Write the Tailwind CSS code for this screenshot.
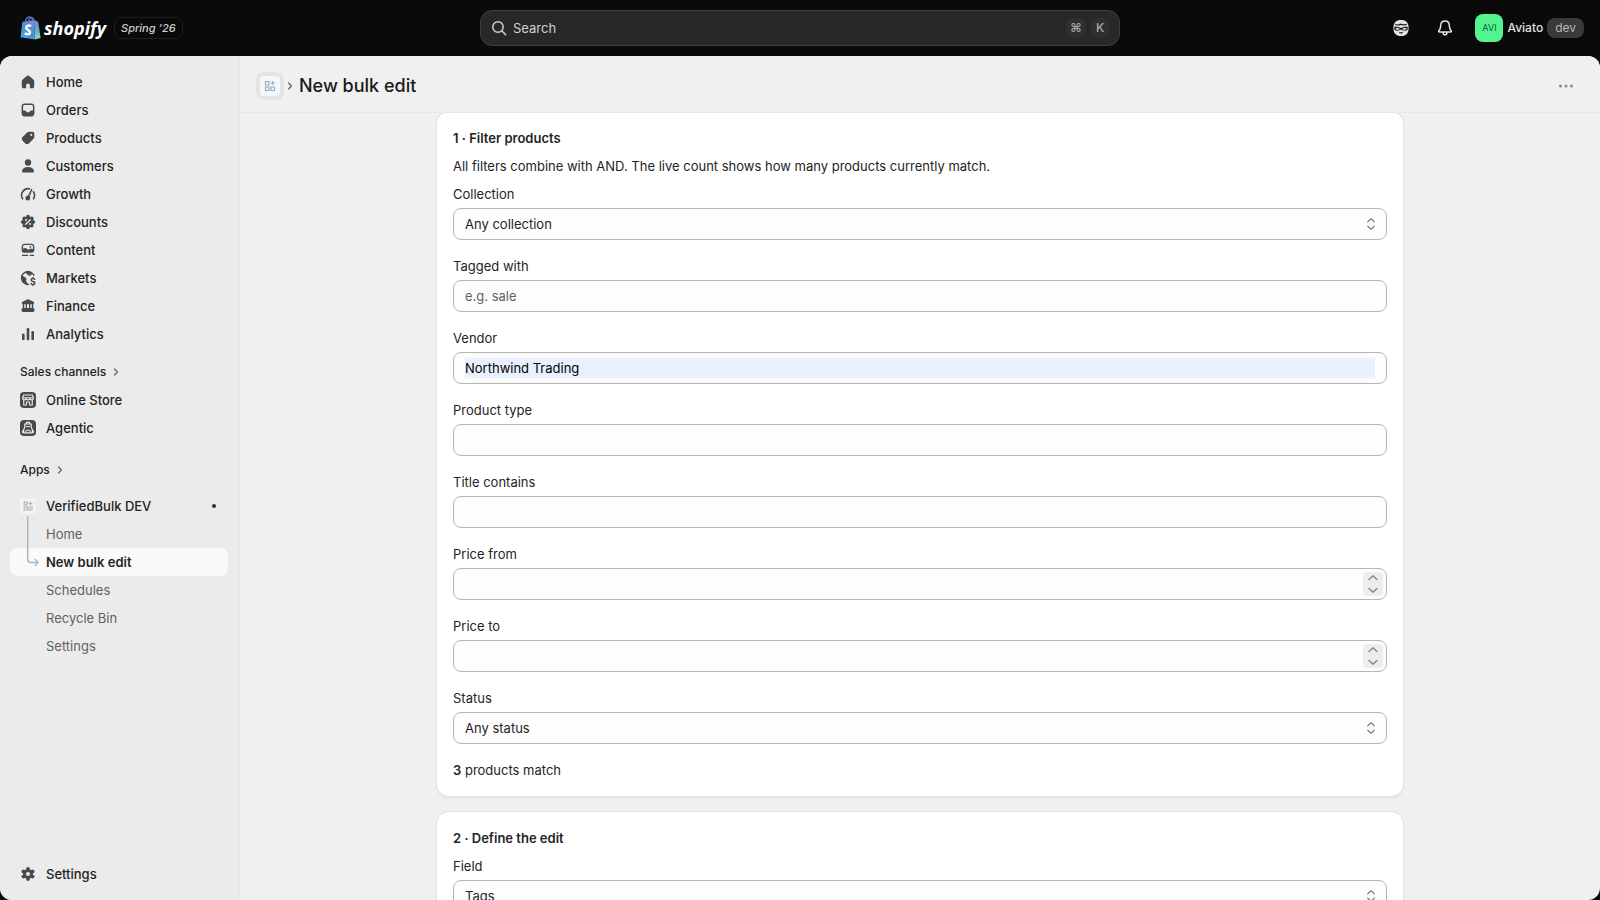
<!DOCTYPE html>
<html lang="en">
<head>
  <meta charset="UTF-8">
  <meta name="viewport" content="width=device-width, initial-scale=1.0">
  <title>VerifiedBulk DEV · New bulk edit</title>
  <script src="https://cdn.jsdelivr.net/npm/@tailwindcss/browser@4"></script>
</head>
<body class="h-screen overflow-hidden flex flex-col bg-[#0a0a0a] font-['Inter','Liberation_Sans',sans-serif] text-[13px] leading-5 text-[#242424]">

  <!-- Top bar -->
  <header class="h-14 shrink-0 grid grid-cols-[1fr_640px_1fr] items-center px-4">
    <div class="flex items-center gap-2">
      <a href="#" class="flex items-center gap-[3px] pl-1" aria-label="Shopify home">
        <svg class="w-[21px] h-6" viewBox="0 0 21 24">
          <defs>
            <linearGradient id="bag" x1="0" y1="1" x2="1" y2="0">
              <stop offset="0" stop-color="#2fc0ea"/>
              <stop offset=".45" stop-color="#4a8fd8"/>
              <stop offset="1" stop-color="#7a8fd8"/>
            </linearGradient>
            <linearGradient id="bagSide" x1="0" y1="0" x2="0" y2="1">
              <stop offset="0" stop-color="#6f88d0"/>
              <stop offset=".6" stop-color="#62b4cc"/>
              <stop offset="1" stop-color="#8fe0a8"/>
            </linearGradient>
          </defs>
          <path d="M2.400 5.800 14 4l.8 19.600L.6 21.200Z" fill="url(#bag)"/>
          <path d="M14 4l4.200 1.800L20.600 22l-5.800 1.600Z" fill="url(#bagSide)"/>
          <path d="M5.400 6.200C5.800 3 7.600 1 9.600 1c1.900 0 2.900 1.800 3 4M8.600 5.500C9 3 10.200 1.700 11.700 1.700c1.400 0 2.200 1.300 2.400 3" fill="none" stroke="#5468b4" stroke-width="1.400"/>
          <path d="M11 10.200C9.200 9 6.200 9.400 6.200 11.700c0 2.300 3.800 2.400 3.800 4.700 0 2-2.800 2.500-5.200.8" fill="none" stroke="#fff" stroke-width="2.400"/>
        </svg>
        <span class="font-['Open_Sans','Noto_Sans',sans-serif] font-bold italic text-[18px] leading-6 text-white">shopify</span>
      </a>
      <span class="h-[22px] px-[6px] flex items-center rounded-lg border border-[#1f1f1f] text-[11px] font-medium italic text-[#cfcfcf]">Spring ’26</span>
    </div>

    <button type="button" class="h-9 w-full flex items-center gap-1 rounded-xl border border-[#3d3d3d] bg-[#282828] pl-2 pr-[9px] text-[#d0d0d0]">
      <svg class="size-5" viewBox="0 0 20 20" fill="none" stroke="currentColor" stroke-width="1.5" stroke-linecap="round"><circle cx="9" cy="9" r="5.200"/><path d="m13 13 3.600 3.600"/></svg>
      <span class="flex-1 text-left">Search</span>
      <kbd class="size-5 rounded-md bg-[#303030] font-[Inter,'DejaVu_Sans',sans-serif] text-xs leading-5 font-medium text-[#a8a8a8] text-center">⌘</kbd>
      <kbd class="size-5 rounded-md bg-[#303030] font-[Inter,sans-serif] text-xs leading-5 font-medium text-[#a8a8a8] text-center">K</kbd>
    </button>

    <div class="flex items-center justify-end text-[#e3e3e3]">
      <button type="button" class="w-11 flex justify-center" aria-label="Sidekick">
        <svg class="size-5" viewBox="0 0 20 20">
          <path d="M10 2c5 0 7.600 2.600 7.600 8s-2.600 8-7.600 8-7.600-2.600-7.600-8S5 2 10 2Z" fill="currentColor"/>
          <path d="M4.400 6.300c2 .7 4 .2 5.300-.5 1.400.8 3.800 1.100 5.900.3v.6c-2.200.8-4.300.7-5.700 0-1.500.7-3.600.8-5.500.2Z" fill="#0a0a0a" stroke="#0a0a0a" stroke-width=".3"/>
          <path d="M3.400 8.800c2.600-.2 4.400.3 6.600 1.200 2.200-.9 4-1.400 6.600-1.200v3c-2.300 1.300-4.600 1-6.600-.3-2 1.300-4.300 1.600-6.600.3Z" fill="#0a0a0a"/>
          <path d="M4.500 10.700c1.200-1.100 2.900-.7 4 .3-1.200 1-2.900 1-4-.3ZM11.500 11c1.100-1 2.800-1.400 4-.3-1.100 1.300-2.800 1.300-4 .3Z" fill="currentColor" stroke="currentColor" stroke-width=".5"/>
          <path d="M8 14.200c1.300.5 2.700.5 4 0-.6 1.300-3.400 1.300-4 0Z" fill="#0a0a0a" stroke="#0a0a0a" stroke-width=".4"/>
        </svg>
      </button>
      <button type="button" class="w-11 flex justify-center" aria-label="Notifications">
        <svg class="size-5" viewBox="0 0 20 20" fill="none" stroke="currentColor" stroke-width="1.500" stroke-linejoin="round"><path d="M10 3c-2.700 0-4.300 2-4.300 4.500 0 3-.6 3.900-1.700 5-.6.600-.3 1.500.5 1.500h11c.8 0 1.100-.9.500-1.500-1.100-1.100-1.700-2-1.700-5C14.300 5 12.700 3 10 3ZM8 14.200c0 1.600.8 2.600 2 2.600s2-1 2-2.600"/></svg>
      </button>
      <button type="button" class="ml-2 flex items-center gap-1 text-xs leading-5 font-medium">
        <span class="size-7 rounded-lg bg-[#52f48f] text-[9px] leading-7 font-normal text-[#14603a]">AVI</span>
        Aviato
        <span class="rounded-lg bg-[#3a3a3a] px-2 font-normal text-[#b5b5b5]">dev</span>
      </button>
    </div>
  </header>

  <div class="flex-1 min-h-0 flex rounded-xl overflow-hidden bg-[#f0f0f0]">
    <!-- Navigation -->
    <nav class="w-60 shrink-0 flex flex-col bg-[#ebebeb] border-r border-[#e6e6e6] pt-3 pb-3 px-[10px] font-medium" aria-label="Main">
      <ul>
        <li><a href="#" class="h-7 flex items-center gap-2 px-2">
          <svg class="size-5 text-[#4a4a4a]" viewBox="0 0 20 20" fill="currentColor"><path d="M8.800 4.100a1.900 1.900 0 0 1 2.400 0l4.200 3.500c.5.400.8 1 .8 1.700v5.200c0 1-.8 1.800-1.800 1.800h-1.900a.6.600 0 0 1-.6-.6v-2.400a1.900 1.900 0 0 0-3.800 0v2.400a.6.600 0 0 1-.6.600H5.600c-1 0-1.800-.8-1.800-1.800V9.300c0-.7.3-1.300.8-1.700Z"/></svg>
          Home</a></li>
        <li><a href="#" class="h-7 flex items-center gap-2 px-2">
          <svg class="size-5 text-[#4a4a4a]" viewBox="0 0 20 20" fill="currentColor"><path fill-rule="evenodd" d="M6.500 3.500h7c1.700 0 2.900 1.300 2.900 2.900v7.200c0 1.600-1.200 2.900-2.900 2.900h-7c-1.700 0-2.900-1.300-2.900-2.900V6.400c0-1.600 1.200-2.900 2.900-2.900Zm.1 1.500C5.700 5 5.100 5.600 5.100 6.500v4h1.700c.6 0 1 .3 1.200.8.300.7 1 1.200 2 1.200s1.700-.5 2-1.200c.2-.5.600-.8 1.200-.8h1.700v-4c0-.9-.6-1.500-1.500-1.500Z"/></svg>
          Orders</a></li>
        <li><a href="#" class="h-7 flex items-center gap-2 px-2">
          <svg class="size-5 text-[#4a4a4a]" viewBox="0 0 20 20" fill="currentColor"><path fill-rule="evenodd" d="M11.200 3.700h3.300c1 0 1.800.8 1.800 1.800v3.300c0 .8-.3 1.500-.8 2l-4.600 4.600c-1 1-2.600 1-3.600 0l-2.700-2.700c-1-1-1-2.600 0-3.600l4.600-4.600c.5-.5 1.200-.8 2-.8Zm2 4.200a1.100 1.100 0 1 0 0-2.200 1.100 1.100 0 0 0 0 2.200Z"/></svg>
          Products</a></li>
        <li><a href="#" class="h-7 flex items-center gap-2 px-2">
          <svg class="size-5 text-[#4a4a4a]" viewBox="0 0 20 20" fill="currentColor"><circle cx="10" cy="6.500" r="3.200"/><path d="M10 11c-3.300 0-5.500 1.600-6 3.900-.2.900.6 1.700 1.500 1.700h9c.9 0 1.700-.8 1.500-1.700-.5-2.300-2.700-3.900-6-3.900Z"/></svg>
          Customers</a></li>
        <li><a href="#" class="h-7 flex items-center gap-2 px-2">
          <svg class="size-5 text-[#4a4a4a]" viewBox="0 0 20 20" fill="none" stroke="currentColor" stroke-width="1.600" stroke-linecap="round"><path d="M4.600 14.800A6.600 6.600 0 0 1 11.600 4.800M15.300 7.600a6.600 6.600 0 0 1 .2 7.200"/><path d="M13.700 5.300 9.300 13.300 10.600 14Z" stroke-width="1"/><circle cx="9.800" cy="14.200" r="1.600" fill="currentColor"/></svg>
          Growth</a></li>
        <li><a href="#" class="h-7 flex items-center gap-2 px-2">
          <svg class="size-5" viewBox="0 0 20 20"><g fill="#4a4a4a"><circle cx="10" cy="10" r="5.800"/><circle cx="10" cy="4.600" r="1.800"/><circle cx="13.800" cy="6.200" r="1.800"/><circle cx="15.400" cy="10" r="1.800"/><circle cx="13.800" cy="13.800" r="1.800"/><circle cx="10" cy="15.400" r="1.800"/><circle cx="6.200" cy="13.800" r="1.800"/><circle cx="4.600" cy="10" r="1.800"/><circle cx="6.200" cy="6.200" r="1.800"/></g><path d="m12.300 7.700-4.600 4.600" stroke="#ebebeb" stroke-width="1.300" stroke-linecap="round"/><circle cx="8" cy="8" r="1" fill="#ebebeb"/><circle cx="12" cy="12" r="1" fill="#ebebeb"/></svg>
          Discounts</a></li>
        <li><a href="#" class="h-7 flex items-center gap-2 px-2">
          <svg class="size-5 text-[#4a4a4a]" viewBox="0 0 20 20" fill="currentColor"><path fill-rule="evenodd" d="M6.200 3.700h7.600c1.400 0 2.500 1.100 2.500 2.500v4.100c0 1.400-1.100 2.500-2.500 2.500H6.200a2.500 2.500 0 0 1-2.500-2.500V6.200c0-1.400 1.100-2.500 2.500-2.500ZM6.300 5c-.7 0-1.200.5-1.200 1.200v2.500c1.500-1 3-.8 4.100.2l1 .9c.8-.9 2.900-1.500 4.700-.6v-3c0-.7-.5-1.200-1.200-1.200Z"/><circle cx="12.400" cy="6.900" r=".9"/><path d="M4 14.700h6.200v1.400H4zM11.800 14.700H16v1.400h-4.200z"/></svg>
          Content</a></li>
        <li><a href="#" class="h-7 flex items-center gap-2 px-2">
          <svg class="size-5 text-[#4a4a4a]" viewBox="0 0 20 20" fill="none" stroke="currentColor" stroke-width="1.500" stroke-linecap="round"><path d="M15.800 7.200A6.400 6.400 0 1 0 10.300 16.400"/><path d="M4 7.600c1.200 1.600 3 1.500 3.800 2.700.8 1.300-.6 2 .3 3.500L9.300 16C5.500 15.700 3.200 12 4 7.600ZM8.600 4.200c-.6 1.300.3 1.800 1.300 2 .8.200.5 1.500 1.500 1.400 1.200 0 1.300-1.200 2.600-1.800C12.500 4.200 10.500 3.700 8.600 4.200Z" fill="currentColor" stroke-width=".8"/><path d="M16.700 11.200c-.4-.5-1-.7-1.700-.7-1.200 0-1.900.6-1.900 1.500 0 2 3.800 1 3.800 3 0 1-.8 1.500-1.900 1.500-.9 0-1.600-.3-2-.9M15 9.500v1M15 16.500v1" stroke-width="1.400"/></svg>
          Markets</a></li>
        <li><a href="#" class="h-7 flex items-center gap-2 px-2">
          <svg class="size-5 text-[#4a4a4a]" viewBox="0 0 20 20" fill="currentColor"><path d="M9.200 3.500a2 2 0 0 1 1.600 0l4.700 2.300c1.200.6.900 2.400-.5 2.400H5c-1.400 0-1.700-1.800-.5-2.400ZM4.700 8h1.500v4.500H4.700zM7.700 8h1.300v4.500H7.700zM11 8h1.300v4.500H11zM13.800 8h1.500v4.500h-1.500z"/><path d="M5.100 12h9.800c.9 0 1.600.9 1.600 2.100s-.5 1.900-1.400 1.900H4.900c-.9 0-1.400-.7-1.400-1.900S4.200 12 5.100 12Z"/></svg>
          Finance</a></li>
        <li><a href="#" class="h-7 flex items-center gap-2 px-2">
          <svg class="size-5 text-[#4a4a4a]" viewBox="0 0 20 20" fill="currentColor"><rect x="4" y="9.500" width="2.600" height="6.700" rx="1.200"/><rect x="8.700" y="4" width="2.600" height="12.200" rx="1.200"/><rect x="13.400" y="7" width="2.600" height="9.200" rx="1.200"/></svg>
          Analytics</a></li>
      </ul>

      <a href="#" class="mt-3 h-6 flex items-center gap-[6px] px-[10px] text-xs">Sales channels
        <svg class="size-2" viewBox="0 0 8 8" fill="none" stroke="#616161" stroke-width="1.200" stroke-linecap="round" stroke-linejoin="round"><path d="m2.500 1 3 3-3 3"/></svg></a>
      <ul class="mt-[2px]">
        <li><a href="#" class="h-7 flex items-center gap-2 px-2">
          <svg class="size-5" viewBox="0 0 20 20"><rect x="2" y="2" width="16" height="16" rx="4" fill="#4a4a4a"/><path d="M5.600 5h8.800l1.100 3.200c0 1-.8 1.700-1.800 1.700s-1.800-.7-1.800-1.700c0 1-.9 1.700-1.900 1.700s-1.900-.7-1.900-1.700c0 1-.8 1.700-1.800 1.700s-1.800-.7-1.800-1.700ZM4.700 7.700h10.600M5.700 10v5h2.700v-3h3.200v3h2.700v-5" fill="none" stroke="#ebebeb" stroke-width="1.100" stroke-linejoin="round"/></svg>
          Online Store</a></li>
        <li><a href="#" class="h-7 flex items-center gap-2 px-2">
          <svg class="size-5" viewBox="0 0 20 20"><rect x="2" y="2" width="16" height="16" rx="4" fill="#4a4a4a"/><path d="M8 5.700C8 4.700 8.800 4.200 10 4.200s2 .5 2 1.500M6.800 6h6.400v3l1.100 2.500v3.300H5.700v-3.300L6.800 9ZM5.400 12.300 4.300 14l1.400.8M14.600 12.300l1.100 1.700-1.400.8" fill="none" stroke="#ebebeb" stroke-width="1.200" stroke-linejoin="round" stroke-linecap="round"/><path d="M8 8.600h4M8 14.500v-2.200h4v2.200" fill="none" stroke="#ebebeb"/></svg>
          Agentic</a></li>
      </ul>

      <a href="#" class="mt-4 h-6 flex items-center gap-[6px] px-[10px] text-xs">Apps
        <svg class="size-2" viewBox="0 0 8 8" fill="none" stroke="#616161" stroke-width="1.200" stroke-linecap="round" stroke-linejoin="round"><path d="m2.500 1 3 3-3 3"/></svg></a>
      <a href="#" class="mt-[10px] h-7 flex items-center gap-2 px-2">
        <svg class="size-5" viewBox="0 0 20 20"><rect x="2" y="2" width="16" height="16" rx="3" fill="#f2f2f2"/><path d="M6.200 6.200h3v3h-3zM6.200 11h3v3h-3zM11 11h3v3h-3zM12.500 5.700v3.600M10.700 7.500h3.600" fill="none" stroke="#b3b3b3" stroke-width="1.200"/></svg>
        <span class="flex-1">VerifiedBulk DEV</span>
        <span class="size-1 mr-[5px] rounded-full bg-[#303030]"></span>
      </a>
      <ul class="relative font-normal text-[#616161]">
        <li><a href="#" class="h-7 flex items-center pl-9">Home</a></li>
        <li><a href="#" aria-current="page" class="h-7 mr-px flex items-center pl-9 rounded-lg bg-[#fafafa] font-semibold text-[#242424]">New bulk edit</a></li>
        <li><a href="#" class="h-7 flex items-center pl-9">Schedules</a></li>
        <li><a href="#" class="h-7 flex items-center pl-9">Recycle Bin</a></li>
        <li><a href="#" class="h-7 flex items-center pl-9">Settings</a></li>
        <svg class="absolute -top-1 left-4 w-4 h-[52px]" viewBox="0 0 16 52" fill="none" stroke="#b5b5b5" stroke-width="1.500" stroke-linecap="round" stroke-linejoin="round"><path d="M1.700 0v43.500c0 2 1 3 3 3H12.200M9.200 43.500l3 3-3 3"/></svg>
      </ul>

      <a href="#" class="mt-auto h-7 flex items-center gap-2 px-2">
        <svg class="size-5" viewBox="0 0 20 20"><g fill="#4a4a4a"><circle cx="10" cy="10" r="5"/><circle cx="10" cy="5" r="1.900"/><circle cx="14.600" cy="7.400" r="1.900"/><circle cx="14.600" cy="12.600" r="1.900"/><circle cx="10" cy="15" r="1.900"/><circle cx="5.400" cy="12.600" r="1.900"/><circle cx="5.400" cy="7.400" r="1.900"/></g><circle cx="10" cy="10" r="2" fill="#ebebeb"/></svg>
        Settings</a>
    </nav>

    <!-- App page -->
    <main class="flex-1 min-w-0 flex flex-col">
      <div class="relative h-[57px] shrink-0 flex items-center gap-1 bg-[#f0f0f0] border-b border-[#e8e8e8] px-4 pt-1">
        <a href="#" class="size-7 grid place-items-center rounded-lg bg-[#e3e3e3]" aria-label="VerifiedBulk DEV">
          <svg class="size-5" viewBox="0 0 20 20"><rect width="20" height="20" rx="4" fill="#f3f7fa"/><path d="M5.500 5.500h3.500v3.500H5.500zM5.500 11h3.500v3.500H5.500zM11 11h3.500v3.500H11zM12.800 5v4M10.800 7h4" fill="none" stroke="#9aa8ba" stroke-width="1.100"/></svg>
        </a>
        <svg class="w-1 h-2" viewBox="0 0 4 8" fill="none" stroke="#616161" stroke-width="1.200" stroke-linecap="round" stroke-linejoin="round"><path d="m.7 1 2.600 3L.7 7"/></svg>
        <h1 class="ml-[3px] text-lg font-medium text-[#1a1a1a]">New bulk edit</h1>
        <button type="button" class="ml-auto mr-2 size-5" aria-label="More actions">
          <svg viewBox="0 0 20 20" fill="#8a8a8a"><circle cx="4.500" cy="10" r="1.500"/><circle cx="10" cy="10" r="1.500"/><circle cx="15.500" cy="10" r="1.500"/></svg>
        </button>
      </div>

      <form class="-mt-px flex-1 min-h-0 w-full max-w-[998px] mx-auto px-4 flex flex-col gap-4">
        <section class="shrink-0 rounded-xl bg-white p-4 shadow-[0_0_0_1px_#e3e3e3,0_1px_1px_#c4c4c4,0_3px_3px_#00000008]">
          <h2 class="font-semibold">1 · Filter products</h2>
          <p class="mt-2">All filters combine with AND. The live count shows how many products currently match.</p>

          <div class="mt-2 flex flex-col gap-4">
            <div>
              <label for="collection">Collection</label>
              <div class="relative mt-1">
                <select id="collection" class="block appearance-none w-full h-8 rounded-lg border border-[#b5b5b5] bg-[#fdfdfd] px-[11px]">
                  <option>Any collection</option>
                </select>
                <svg class="pointer-events-none absolute right-2 top-2 size-4" viewBox="0 0 16 16" fill="none" stroke="#8a8a8a" stroke-width="1.500" stroke-linecap="round" stroke-linejoin="round"><path d="m4.800 5.700 3.200-3 3.200 3M4.800 10.300l3.200 3 3.200-3"/></svg>
              </div>
            </div>

            <div>
              <label for="tagged">Tagged with</label>
              <input id="tagged" type="text" placeholder="e.g. sale" class="mt-1 block w-full h-8 rounded-lg border border-[#b5b5b5] bg-[#fdfdfd] px-[11px] placeholder:text-[#616161]">
            </div>

            <div>
              <label for="vendor">Vendor</label>
              <div class="mt-1 h-8 flex items-center rounded-lg border border-[#b5b5b5] bg-[#fdfdfd] px-[11px]">
                <input id="vendor" type="text" value="Northwind Trading" class="w-full h-5 bg-[#e8f0fe] text-black">
              </div>
            </div>

            <div>
              <label for="type">Product type</label>
              <input id="type" type="text" class="mt-1 block w-full h-8 rounded-lg border border-[#b5b5b5] bg-[#fdfdfd] px-[11px]">
            </div>

            <div>
              <label for="title">Title contains</label>
              <input id="title" type="text" class="mt-1 block w-full h-8 rounded-lg border border-[#b5b5b5] bg-[#fdfdfd] px-[11px]">
            </div>

            <div>
              <label for="price-from">Price from</label>
              <div class="mt-1 h-8 flex items-center rounded-lg border border-[#b5b5b5] bg-[#fdfdfd] pl-[11px] pr-[3px]">
                <input id="price-from" type="text" inputmode="decimal" class="flex-1 h-5">
                <div class="w-5 h-6 flex flex-col rounded bg-[#ededed]">
                  <button type="button" class="h-3" aria-label="Increase price from"><svg class="w-5 h-3" viewBox="0 0 20 12" fill="none" stroke="#8a8a8a" stroke-width="1.500" stroke-linecap="round" stroke-linejoin="round"><path d="m6 7.500 4-3.800 4 3.800"/></svg></button>
                  <button type="button" class="h-3" aria-label="Decrease price from"><svg class="w-5 h-3" viewBox="0 0 20 12" fill="none" stroke="#8a8a8a" stroke-width="1.500" stroke-linecap="round" stroke-linejoin="round"><path d="m6 4.500 4 3.800 4-3.800"/></svg></button>
                </div>
              </div>
            </div>

            <div>
              <label for="price-to">Price to</label>
              <div class="mt-1 h-8 flex items-center rounded-lg border border-[#b5b5b5] bg-[#fdfdfd] pl-[11px] pr-[3px]">
                <input id="price-to" type="text" inputmode="decimal" class="flex-1 h-5">
                <div class="w-5 h-6 flex flex-col rounded bg-[#ededed]">
                  <button type="button" class="h-3" aria-label="Increase price to"><svg class="w-5 h-3" viewBox="0 0 20 12" fill="none" stroke="#8a8a8a" stroke-width="1.500" stroke-linecap="round" stroke-linejoin="round"><path d="m6 7.500 4-3.800 4 3.800"/></svg></button>
                  <button type="button" class="h-3" aria-label="Decrease price to"><svg class="w-5 h-3" viewBox="0 0 20 12" fill="none" stroke="#8a8a8a" stroke-width="1.500" stroke-linecap="round" stroke-linejoin="round"><path d="m6 4.500 4 3.800 4-3.800"/></svg></button>
                </div>
              </div>
            </div>

            <div>
              <label for="status">Status</label>
              <div class="relative mt-1">
                <select id="status" class="block appearance-none w-full h-8 rounded-lg border border-[#b5b5b5] bg-[#fdfdfd] px-[11px]">
                  <option>Any status</option>
                </select>
                <svg class="pointer-events-none absolute right-2 top-2 size-4" viewBox="0 0 16 16" fill="none" stroke="#8a8a8a" stroke-width="1.500" stroke-linecap="round" stroke-linejoin="round"><path d="m4.800 5.700 3.200-3 3.200 3M4.800 10.300l3.200 3 3.200-3"/></svg>
              </div>
            </div>

            <p><strong class="font-semibold">3</strong> products match</p>
          </div>
        </section>

        <section class="shrink-0 rounded-xl bg-white p-4 shadow-[0_0_0_1px_#e3e3e3,0_1px_1px_#c4c4c4,0_3px_3px_#00000008]">
          <h2 class="font-semibold">2 · Define the edit</h2>
          <div class="mt-2">
            <label for="field">Field</label>
            <div class="relative mt-1">
              <select id="field" class="block appearance-none w-full h-8 rounded-lg border border-[#b5b5b5] bg-[#fdfdfd] px-[11px]">
                <option>Tags</option>
              </select>
              <svg class="pointer-events-none absolute right-2 top-2 size-4" viewBox="0 0 16 16" fill="none" stroke="#8a8a8a" stroke-width="1.500" stroke-linecap="round" stroke-linejoin="round"><path d="m4.800 5.700 3.200-3 3.200 3M4.800 10.300l3.200 3 3.200-3"/></svg>
            </div>
          </div>
        </section>
      </form>
    </main>
  </div>
</body>
</html>
